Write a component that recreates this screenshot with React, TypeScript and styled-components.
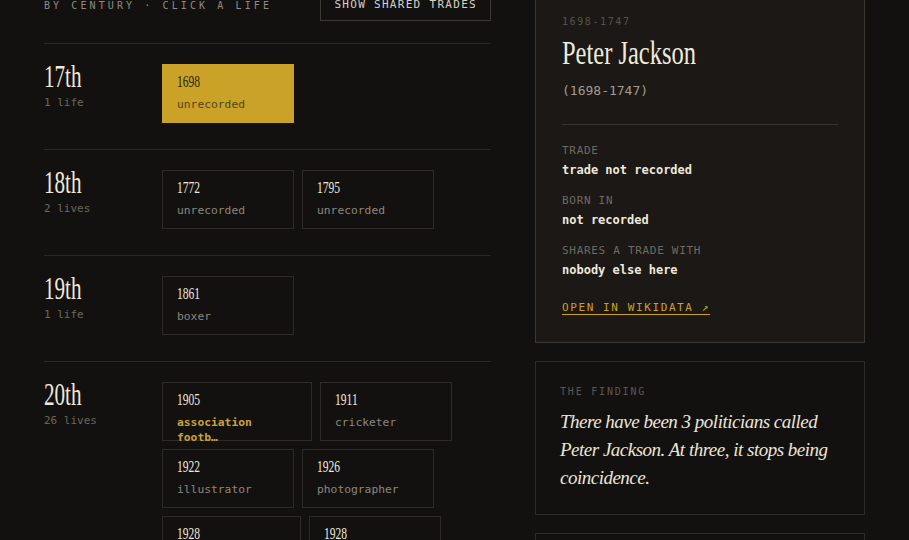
import React from 'react'
import styled, { createGlobalStyle } from 'styled-components'

const serif = `"Liberation Serif", "DejaVu Serif", serif`
const mono = `"DejaVu Sans Mono", "Liberation Mono", monospace`
const gold = '#c9a227'

type Life = { year: number; trade: string; selected?: boolean; shared?: boolean }
type Century = { label: string; count: string; lives: Life[] }

const centuries: Century[] = [
  { label: '17th', count: '1 life', lives: [{ year: 1698, trade: 'unrecorded', selected: true }] },
  {
    label: '18th',
    count: '2 lives',
    lives: [
      { year: 1772, trade: 'unrecorded' },
      { year: 1795, trade: 'unrecorded' },
    ],
  },
  { label: '19th', count: '1 life', lives: [{ year: 1861, trade: 'boxer' }] },
  {
    label: '20th',
    count: '26 lives',
    lives: [
      { year: 1905, trade: 'association football player', shared: true },
      { year: 1911, trade: 'cricketer' },
      { year: 1922, trade: 'illustrator' },
      { year: 1926, trade: 'photographer' },
      { year: 1928, trade: 'television actor' },
      { year: 1928, trade: 'politician' },
      { year: 1934, trade: 'rugby union player' },
      { year: 1941, trade: 'politician' },
    ],
  },
]

// long trades get cut so a card never grows past two lines
const clip = (t: string) => (t.length > 18 ? t.slice(0, 17) + '…' : t)

export default function App() {
  return (
    <>
      <GlobalStyle />
      <Page>
        <Timeline>
          <Header>
            <Eyebrow>By century · click a life</Eyebrow>
            <ToggleButton>Show shared trades</ToggleButton>
          </Header>
          {centuries.map((c) => (
            <CenturyRow key={c.label}>
              <CenturyInfo>
                <CenturyName>{c.label}</CenturyName>
                <LifeCount>{c.count}</LifeCount>
              </CenturyInfo>
              <Lives>
                {c.lives.map((l, i) => (
                  <LifeCard key={`${l.year}-${i}`} $selected={l.selected}>
                    <Year $selected={l.selected}>{l.year}</Year>
                    <Trade $selected={l.selected} $shared={l.shared}>
                      {clip(l.trade)}
                    </Trade>
                  </LifeCard>
                ))}
              </Lives>
            </CenturyRow>
          ))}
        </Timeline>

        <Sidebar>
          <DetailCard>
            <Dates>1698-1747</Dates>
            <PersonName>Peter Jackson</PersonName>
            <Lifespan>(1698-1747)</Lifespan>
            <Divider />
            <Fields>
              <Field>
                <FieldLabel>Trade</FieldLabel>
                <FieldValue>trade not recorded</FieldValue>
              </Field>
              <Field>
                <FieldLabel>Born in</FieldLabel>
                <FieldValue>not recorded</FieldValue>
              </Field>
              <Field>
                <FieldLabel>Shares a trade with</FieldLabel>
                <FieldValue>nobody else here</FieldValue>
              </Field>
            </Fields>
            <WikiLink href="#">Open in Wikidata ↗</WikiLink>
          </DetailCard>

          <FindingCard>
            <SmallCaps>The finding</SmallCaps>
            <Finding>
              There have been 3 politicians called Peter Jackson. At three, it stops being
              coincidence.
            </Finding>
          </FindingCard>

          <FindingCard>
            <SmallCaps>Most common trade</SmallCaps>
            <Finding>politician</Finding>
          </FindingCard>
        </Sidebar>
      </Page>
    </>
  )
}

const GlobalStyle = createGlobalStyle`
  html, body {
    margin: 0;
    background: #121110;
    overflow: hidden;
  }
  * { box-sizing: border-box; }
`

const Page = styled.main`
  display: flex;
  align-items: flex-start;
  gap: 44px;
  padding: 0 44px;
  margin-top: -11px;
`

const Timeline = styled.section`
  flex: 1;
  min-width: 0;
`

const Header = styled.div`
  display: flex;
  align-items: center;
  justify-content: space-between;
  margin-bottom: 22px;
`

const Eyebrow = styled.span`
  font-family: ${mono};
  font-size: 10px;
  letter-spacing: 3.1px;
  text-transform: uppercase;
  color: #8f8a80;
`

const ToggleButton = styled.button`
  font-family: ${mono};
  font-size: 11px;
  line-height: 12px;
  letter-spacing: 1.3px;
  text-transform: uppercase;
  color: #d6d0c4;
  background: transparent;
  border: 1px solid #3d3a35;
  padding: 9px 13px;
`

const CenturyRow = styled.div`
  display: grid;
  grid-template-columns: 118px 1fr;
  border-top: 1px solid #2a2825;
  padding: 20px 0 26px;
`

const CenturyInfo = styled.div`
  display: flex;
  flex-direction: column;
`

const CenturyName = styled.span`
  display: block;
  font-family: ${serif};
  font-size: 32px;
  line-height: 24px;
  color: #efe9dc;
  transform: scaleX(0.66);
  transform-origin: 0 50%;
`

const LifeCount = styled.span`
  margin-top: 8px;
  font-family: ${mono};
  font-size: 11px;
  line-height: 14px;
  color: #6b675f;
`

const Lives = styled.div`
  display: flex;
  flex-wrap: wrap;
  gap: 8px;
`

const LifeCard = styled.div<{ $selected?: boolean }>`
  min-width: 132px;
  max-width: 150px;
  height: 59px;
  padding: 8px 14px 0;
  background: ${(p) => (p.$selected ? gold : 'transparent')};
  border: 1px solid ${(p) => (p.$selected ? gold : '#2e2b28')};
  cursor: pointer;
`

const Year = styled.span<{ $selected?: boolean }>`
  display: block;
  font-family: ${serif};
  font-size: 17px;
  line-height: 18px;
  color: ${(p) => (p.$selected ? '#2a220e' : '#efe9dc')};
  transform: scaleX(0.68);
  transform-origin: 0 50%;
`

const Trade = styled.span<{ $selected?: boolean; $shared?: boolean }>`
  display: block;
  margin-top: 6px;
  font-family: ${mono};
  font-size: 11.3px;
  line-height: 15px;
  font-weight: ${(p) => (p.$shared ? 700 : 400)};
  color: ${(p) => (p.$selected ? '#55441a' : p.$shared ? '#c9a23a' : '#8c877d')};
`

const Sidebar = styled.aside`
  width: 330px;
  flex-shrink: 0;
  display: flex;
  flex-direction: column;
  gap: 18px;
`

const DetailCard = styled.article`
  display: flex;
  flex-direction: column;
  align-items: flex-start;
  padding: 26px 26px 27px;
  background: #1b1815;
  border: 1px solid #3b3731;
`

const Dates = styled.span`
  font-family: ${mono};
  font-size: 10px;
  line-height: 12px;
  letter-spacing: 1.6px;
  color: #57534c;
`

const PersonName = styled.h1`
  margin: 7px 0 0;
  font-family: ${serif};
  font-weight: 400;
  font-size: 34px;
  line-height: 36px;
  white-space: nowrap;
  color: #f0eadd;
  transform: scaleX(0.72);
  transform-origin: 0 50%;
`

const Lifespan = styled.span`
  margin-top: 12px;
  font-family: ${mono};
  font-size: 13px;
  line-height: 16px;
  color: #a29c90;
`

const Divider = styled.hr`
  align-self: stretch;
  margin: 25px 0 0;
  border: 0;
  border-top: 1px solid #36322c;
`

const Fields = styled.div`
  display: flex;
  flex-direction: column;
  gap: 16px;
  margin-top: 19px;
`

const Field = styled.div`
  display: flex;
  flex-direction: column;
  gap: 4px;
`

const FieldLabel = styled.span`
  font-family: ${mono};
  font-size: 11px;
  line-height: 14px;
  letter-spacing: 0.7px;
  text-transform: uppercase;
  color: #6f6a62;
`

const FieldValue = styled.span`
  font-family: ${mono};
  font-size: 12px;
  line-height: 16px;
  font-weight: 700;
  color: #efe9dc;
`

const WikiLink = styled.a`
  margin-top: 23px;
  font-family: ${mono};
  font-size: 11px;
  line-height: 14px;
  letter-spacing: 1.6px;
  text-transform: uppercase;
  color: ${gold};
  text-decoration: underline;
  text-underline-offset: 3px;
  text-decoration-thickness: 1px;
`

const FindingCard = styled.article`
  padding: 24px 24px 22px;
  border: 1px solid #2e2c29;
`

const SmallCaps = styled.span`
  display: block;
  font-family: ${mono};
  font-size: 10px;
  line-height: 12px;
  letter-spacing: 1.8px;
  text-transform: uppercase;
  color: #5c5850;
`

const Finding = styled.p`
  margin: 10px 0 0;
  font-family: ${serif};
  font-style: italic;
  font-size: 19px;
  line-height: 28px;
  letter-spacing: -0.5px;
  color: #ece5d6;
`
